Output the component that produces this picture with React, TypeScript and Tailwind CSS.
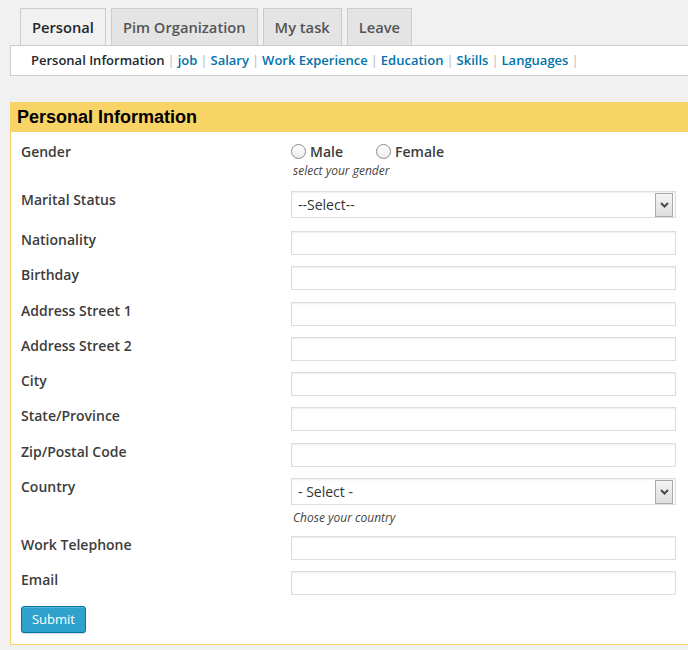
import React from 'react';

function SelectBox({ text }: { text: string }) {
  return (
    <div className="relative flex h-[27px] w-[385px] items-center border border-[#dddddd] bg-white pl-[6px] text-[14px] text-[#333] shadow-[inset_0_1px_2px_rgba(0,0,0,0.07)]">
      <span>{text}</span>
      <div className="absolute right-[2px] top-[1px] flex h-[24px] w-[18px] items-center justify-center border border-[#a9a9a9] bg-gradient-to-b from-[#f4f4f4] to-[#dedede]">
        <svg width="9" height="6" viewBox="0 0 9 6">
          <path d="M1 1 L4.5 4.5 L8 1" stroke="#4a4a4a" strokeWidth="2" fill="none" />
        </svg>
      </div>
    </div>
  );
}

function TextInput() {
  return (
    <div className="h-[24px] w-[385px] border border-[#dddddd] bg-white shadow-[inset_0_1px_2px_rgba(0,0,0,0.07)]" />
  );
}

function Row({ label, labelOffset, children, className }: { label: string; labelOffset: string; children: React.ReactNode; className?: string }) {
  return (
    <div className={`flex items-start ${className ?? ''}`}>
      <div className={`w-[270px] shrink-0 text-[14px] leading-[20px] font-semibold text-[#3c3c3c] ${labelOffset}`}>{label}</div>
      <div>{children}</div>
    </div>
  );
}

function Radio({ label }: { label: string }) {
  return (
    <label className="flex items-center gap-[4px]">
      <span className="h-[15px] w-[15px] rounded-full border border-[#8c8c8c] bg-gradient-to-b from-white to-[#ececec]" />
      <span className="font-semibold text-[#3c3c3c]">{label}</span>
    </label>
  );
}

export default function App() {
  const tabs = ['Personal', 'Pim Organization', 'My task', 'Leave'];
  const links = ['job', 'Salary', 'Work Experience', 'Education', 'Skills', 'Languages'];
  const plainRows = ['Nationality', 'Birthday', 'Address Street 1', 'Address Street 2', 'City', 'State/Province', 'Zip/Postal Code'];

  return (
    <div className="min-h-screen w-full overflow-hidden bg-[#f1f1f1] font-['Open_Sans',sans-serif]">
      <div className="w-[760px] pl-[10px] pt-[8px]">
        {/* Tabs */}
        <div className="flex gap-[5px] pl-[10px]">
          {tabs.map((t, i) => (
            <div
              key={t}
              className={`flex h-[37px] items-center border border-b-0 border-[#cccccc] px-[11px] text-[14.7px] font-semibold ${
                i === 0 ? 'bg-[#f1f1f1] text-[#23282d]' : 'bg-[#e4e4e4] text-[#555]'
              }`}
            >
              {t}
            </div>
          ))}
        </div>

        {/* Sub navigation */}
        <div className="flex h-[31px] items-center border border-[#cccccc] bg-white pl-[20px] text-[13px] font-semibold">
          <span className="text-[#23282d]">Personal Information</span>
          {links.map((l) => (
            <React.Fragment key={l}>
              <span className="px-[3px] font-normal text-[#b4b9be]">|</span>
              <a className="text-[#0073aa]">{l}</a>
            </React.Fragment>
          ))}
          <span className="px-[3px] font-normal text-[#b4b9be]">|</span>
        </div>

        {/* Panel */}
        <div className="mt-[26px] border border-[#f8d366] bg-white">
          <div className="flex h-[29px] items-center bg-[#f8d366] pl-[6px] font-['Liberation_Sans',Arial,sans-serif] text-[18px] font-bold text-black">
            Personal Information
          </div>
          <div className="pl-[10px] pb-[11px] pt-[10px]">
            <Row label="Gender" labelOffset="">
              <div className="-mt-[1px] flex h-[20px] items-center gap-[33px] text-[14px]">
                <Radio label="Male" />
                <Radio label="Female" />
              </div>
              <div className="mt-[1px] pl-[2px] text-[12px] leading-[18px] italic text-[#444]">select your gender</div>
            </Row>

            <Row label="Marital Status" labelOffset="-mt-[1px]" className="mt-[11px]">
              <SelectBox text="--Select--" />
            </Row>

            <div className="mt-[13px] flex flex-col gap-[11.3px]">
              {plainRows.map((r) => (
                <Row key={r} label={r} labelOffset="-mt-[1px]">
                  <TextInput />
                </Row>
              ))}
            </div>

            <Row label="Country" labelOffset="-mt-[1px]" className="mt-[11px]">
              <SelectBox text="- Select -" />
              <div className="mt-[4px] pl-[2px] text-[12px] leading-[18px] italic text-[#444]">Chose your country</div>
            </Row>

            <Row label="Work Telephone" labelOffset="-mt-[1px]" className="mt-[9px]">
              <TextInput />
            </Row>
            <Row label="Email" labelOffset="-mt-[1px]" className="mt-[11px]">
              <TextInput />
            </Row>

            <button className="mt-[11px] h-[27px] w-[65px] rounded-[3px] border border-[#0074a2] bg-[#2ea2cc] text-[13px] text-white shadow-[inset_0_1px_0_rgba(120,200,230,0.5),0_1px_0_rgba(0,0,0,0.15)]">
              Submit
            </button>
          </div>
        </div>
      </div>
    </div>
  );
}
